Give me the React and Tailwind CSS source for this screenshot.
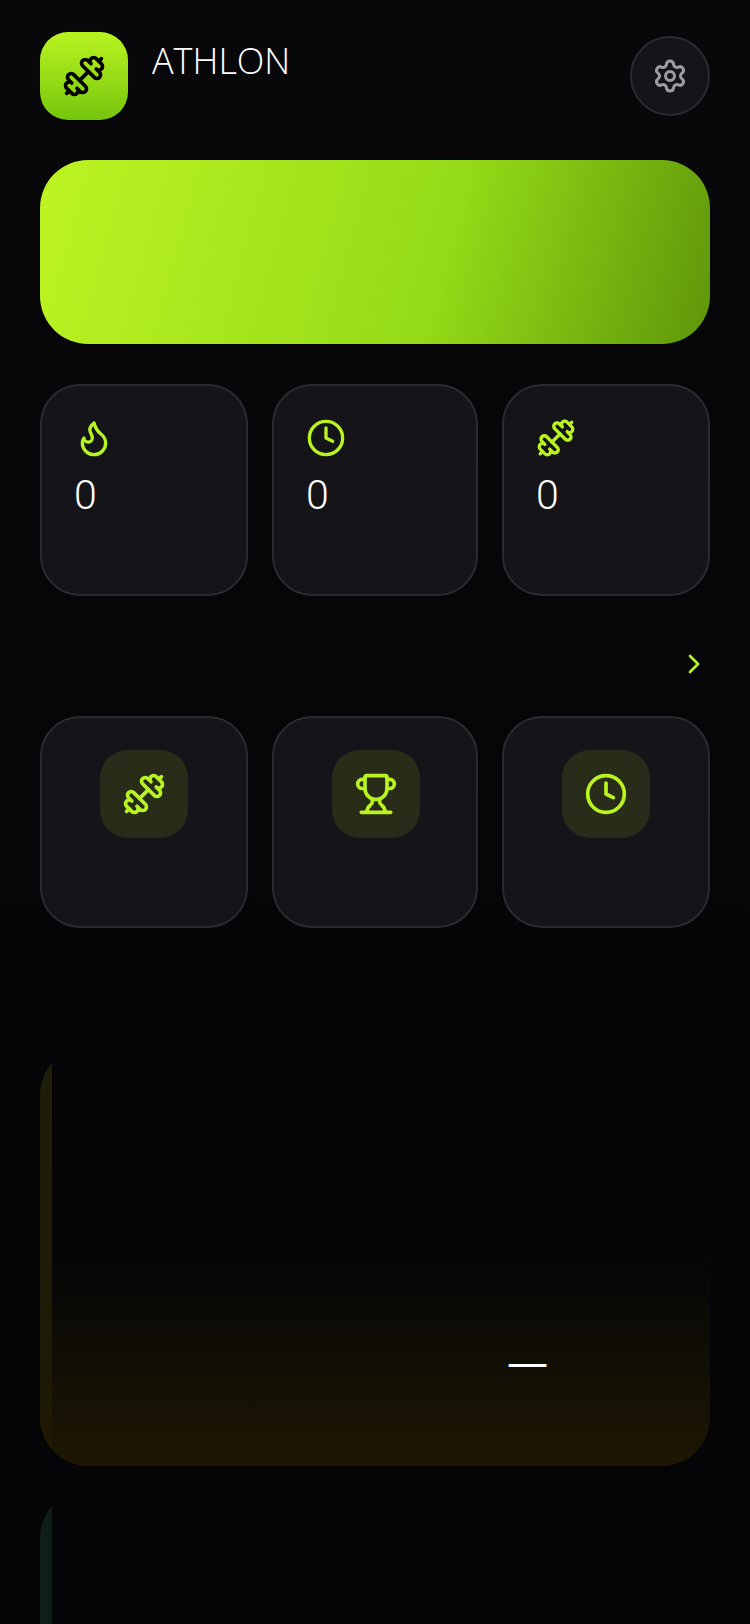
import React from 'react';
import { ChevronRight, Clock, Dumbbell, Flame, Settings, Trophy } from 'lucide-react';

function StatCard({ Icon }) {
  return (
    <div className="h-[212px] rounded-[40px] border-2 border-[#2a2a30] bg-[#141419] p-8">
      <Icon size={40} strokeWidth={2} className="text-[#b9f420]" />
      <p className="mt-2 font-['Roboto',sans-serif] text-[41px] leading-[58px] font-[350] text-white">0</p>
    </div>
  );
}

function ActionCard({ Icon, className = '' }) {
  return (
    <div className={`flex h-[212px] justify-center rounded-[40px] border-2 border-[#2a2a30] bg-[#141419] pt-8 ${className}`}>
      <div className="flex h-[88px] w-[88px] items-center justify-center rounded-[28px] bg-[#282c19]">
        <Icon size={44} strokeWidth={2} className="text-[#b9f420]" />
      </div>
    </div>
  );
}

export default function App() {
  return (
    <div className="h-[1624px] overflow-hidden bg-gradient-to-b from-[#08080b] to-[#050507] to-60% px-10 pt-8">
      {/* Header */}
      <div className="flex items-start">
        <div className="flex h-[88px] w-[88px] items-center justify-center rounded-[28px] bg-gradient-to-b from-[#b9f420] to-[#76c60e]">
          <Dumbbell size={44} strokeWidth={2} className="text-black" />
        </div>
        <h1 className="ml-6 font-['Open_Sans',sans-serif] text-[36px] leading-[58px] font-[340] text-white">ATHLON</h1>
        <button className="mt-1 ml-auto flex h-20 w-20 items-center justify-center rounded-full border-2 border-[#2a2a30] bg-[#141419]">
          <Settings size={36} strokeWidth={2} className="text-[#9c9ca3]" />
        </button>
      </div>

      {/* Banner */}
      <div className="mt-10 h-[184px] rounded-[48px] bg-linear-[105deg] from-[#bdf423] via-[#94da17] via-60% to-[#5f960a]" />

      {/* Stats */}
      <div className="mt-10 grid grid-cols-[208px_206px_208px] gap-6">
        <StatCard Icon={Flame} />
        <StatCard Icon={Clock} />
        <StatCard Icon={Dumbbell} />
      </div>

      {/* Quick actions */}
      <div className="mt-[52px] flex h-8 justify-end">
        <ChevronRight size={32} strokeWidth={2} className="text-[#b9f420]" />
      </div>
      <div className="mt-9 grid grid-cols-[208px_206px_208px] gap-6">
        <ActionCard Icon={Dumbbell} />
        <ActionCard Icon={Trophy} className="pl-[2px]" />
        <ActionCard Icon={Clock} />
      </div>

      {/* Feature cards */}
      <div className="mt-[119px] flex h-[419px] overflow-hidden rounded-[48px]">
        <div className="w-3 bg-gradient-to-b from-[#1d1e0a] to-[#1e1803]" />
        <div className="flex flex-1 items-end justify-end bg-gradient-to-b from-transparent from-50% to-[#1d1703] pr-[162px] pb-[86px]">
          <span className="font-['Open_Sans',sans-serif] text-[41px] leading-[40px] text-white">—</span>
        </div>
      </div>
      <div className="mt-6 flex h-[419px] overflow-hidden rounded-[48px]">
        <div className="w-3 bg-[#0f1f18]" />
      </div>
    </div>
  );
}
